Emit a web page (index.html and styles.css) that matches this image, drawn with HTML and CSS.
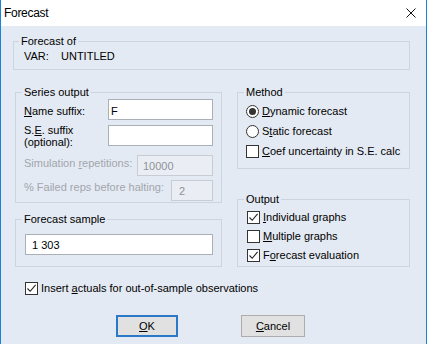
FILE: index.html
```html
<!DOCTYPE html>
<html>
<head>
<meta charset="utf-8">
<title>Forecast</title>
<link rel="stylesheet" href="styles.css">
</head>
<body>
<div class="window">
  <div class="titlebar">
    <span class="title">Forecast</span>
    <svg class="close" width="10" height="10" viewBox="0 0 10 10"><path d="M0.5 0.5 L9.5 9.5 M9.5 0.5 L0.5 9.5" stroke="#111" stroke-width="1" fill="none"/></svg>
  </div>
  <div class="content">
    <fieldset class="group g-of">
      <legend>Forecast of</legend>
      <div class="of-row"><span class="of-key">VAR:</span><span>UNTITLED</span></div>
    </fieldset>

    <div class="columns">
      <div class="col col-left">
        <fieldset class="group g-series">
          <legend>Series output</legend>
          <div class="frow r1"><span class="lbl"><u>N</u>ame suffix:</span><input class="tb w-wide" type="text" value="F"></div>
          <div class="frow r2"><span class="lbl">S.<u>E</u>. suffix<br>(optional):</span><input class="tb w-wide" type="text" value=""></div>
          <div class="frow r3"><span class="lbl dis">Simulation <u>r</u>epetitions:</span><input class="tb w-sim" type="text" value="10000" disabled></div>
          <div class="frow r4"><span class="lbl dis">% Failed reps before halting:</span><input class="tb w-fail" type="text" value="2" disabled></div>
        </fieldset>
        <fieldset class="group g-sample">
          <legend>Forecast sample</legend>
          <input class="tb w-full" type="text" value="1 303">
        </fieldset>
      </div>
      <div class="col col-right">
        <fieldset class="group g-method">
          <legend>Method</legend>
          <div class="opt"><span class="radio on"></span><span><u>D</u>ynamic forecast</span></div>
          <div class="opt"><span class="radio"></span><span>S<u>t</u>atic forecast</span></div>
          <div class="opt"><span class="cbox"></span><span><u>C</u>oef uncertainty in S.E. calc</span></div>
        </fieldset>
        <fieldset class="group g-output">
          <legend>Output</legend>
          <div class="opt"><span class="cbox"><svg width="11" height="11" viewBox="0 0 11 11"><path d="M1.5 5.5 L4.2 8.3 L9.6 1.8" stroke="#222" stroke-width="1.1" fill="none"/></svg></span><span><u>I</u>ndividual graphs</span></div>
          <div class="opt"><span class="cbox"></span><span><u>M</u>ultiple graphs</span></div>
          <div class="opt"><span class="cbox"><svg width="11" height="11" viewBox="0 0 11 11"><path d="M1.5 5.5 L4.2 8.3 L9.6 1.8" stroke="#222" stroke-width="1.1" fill="none"/></svg></span><span>F<u>o</u>recast evaluation</span></div>
        </fieldset>
      </div>
    </div>

    <div class="opt insert"><span class="cbox"><svg width="11" height="11" viewBox="0 0 11 11"><path d="M1.5 5.5 L4.2 8.3 L9.6 1.8" stroke="#222" stroke-width="1.1" fill="none"/></svg></span><span>Insert <u>a</u>ctuals for out-of-sample observations</span></div>

    <div class="buttons">
      <button class="btn btn-ok" type="button"><u>O</u>K</button>
      <button class="btn btn-cancel" type="button"><u>C</u>ancel</button>
    </div>
  </div>
</div>
</body>
</html>
```
FILE: styles.css
```css
* { box-sizing: border-box; }
html, body { margin: 0; padding: 0; }
body {
  width: 427px;
  height: 344px;
  overflow: hidden;
  font-family: "Liberation Sans", Arial, sans-serif;
  font-size: 11px;
  color: #000;
  background: #e4eaf3;
}
u { text-decoration: underline; text-underline-offset: 1px; }

.window {
  width: 427px;
  height: 344px;
  border-left: 1px solid #1883d7;
  border-right: 1px solid #1883d7;
  background: #e4eaf3;
  display: flex;
  flex-direction: column;
}
.titlebar {
  flex: none;
  height: 26px;
  background: #fff;
  display: flex;
  align-items: center;
  justify-content: space-between;
  padding: 0 10px 0 3px;
  font-size: 12px;
  letter-spacing: -0.3px;
}
.close { display: block; }

.content { padding: 9px 16px 0 12px; }

.group {
  margin: 0;
  padding: 0;
  min-width: 0;
  border: 1px solid #cdd4de;
}
.group legend {
  padding: 0 2px;
  height: 13px;
  line-height: 13px;
}
.g-of legend { margin-left: 5px; }
.g-series legend, .g-method legend { margin-left: -2px; }
.g-sample legend, .g-output legend { margin-left: -3px; }
.of-row { padding: 2px 0 6px 10px; line-height: 13px; height: 21px; }
.of-key { display: inline-block; width: 37px; }

.columns {
  margin: 16px 0 0 2px;
  display: grid;
  grid-template-columns: 207px 173px;
  column-gap: 15px;
}
.col { display: flex; flex-direction: column; }

.g-series { padding: 0 8px 1px 8px; }
.frow {
  display: flex;
  justify-content: space-between;
  align-items: flex-start;
  height: 21px;
}
.lbl { line-height: 13px; white-space: nowrap; }
.r1 { margin-bottom: 5px; }
.r1 .lbl { padding-top: 6px; }
.r2 { margin-bottom: 9px; }
.r2 .lbl { margin-top: -1px; line-height: 12px; }
.r3 { margin-bottom: 4px; }
.r3 .lbl { padding-top: 2px; }
.r4 .lbl { padding-top: 1px; }
.dis { color: #a2a6ad; }

.tb {
  height: 21px;
  border: 1px solid #abb0b8;
  background: #fff;
  font: inherit;
  color: #000;
  padding: 0 5px;
  margin: 0;
  outline: none;
}
.r1 .tb { padding: 2px 2px 0 2px; }
.tb:disabled {
  background: #eaeef4;
  border-color: #c8ccd3;
  color: #8e9299;
}
.w-wide { width: 105px; }
.w-sim { width: 76px; }
.w-fail { width: 42px; padding-left: 7px; }
.w-full { width: 188px; display: block; padding-left: 6px; }

.g-sample { margin-top: 10px; padding: 8px 8px 11px 9px; }

.g-method { padding: 2px 8px 7px 8px; }
.g-method .opt { height: 20px; }
.g-output { margin-top: 24px; padding: 2px 8px 1px 9px; }
.g-output .opt { height: 19px; }

.opt {
  display: flex;
  align-items: center;
  gap: 3px;
  line-height: 13px;
  white-space: nowrap;
}
.radio {
  width: 13px;
  height: 13px;
  border: 1px solid #333;
  border-radius: 50%;
  background: #fff;
  display: flex;
  align-items: center;
  justify-content: center;
  flex: none;
}
.radio.on::after {
  content: "";
  width: 7px;
  height: 7px;
  border-radius: 50%;
  background: #333;
}
.cbox {
  width: 13px;
  height: 13px;
  border: 1px solid #333;
  background: #fff;
  display: flex;
  align-items: center;
  justify-content: center;
  flex: none;
}
.cbox svg { display: block; }

.insert { margin-top: 12px; padding-left: 12px; height: 19px; }

.buttons {
  margin-top: 17px;
  padding-left: 103px;
  display: flex;
  gap: 63px;
}
.btn {
  height: 22px;
  margin: 0;
  padding: 0;
  font: inherit;
  color: #000;
  background: #e1e1e1;
  border: 1px solid #adadad;
  border-radius: 0;
}
.btn-ok {
  width: 62px;
  border-color: #2a78c8;
  box-shadow: inset 0 0 0 1px #2a78c8;
}
.btn-cancel { width: 64px; }
```
